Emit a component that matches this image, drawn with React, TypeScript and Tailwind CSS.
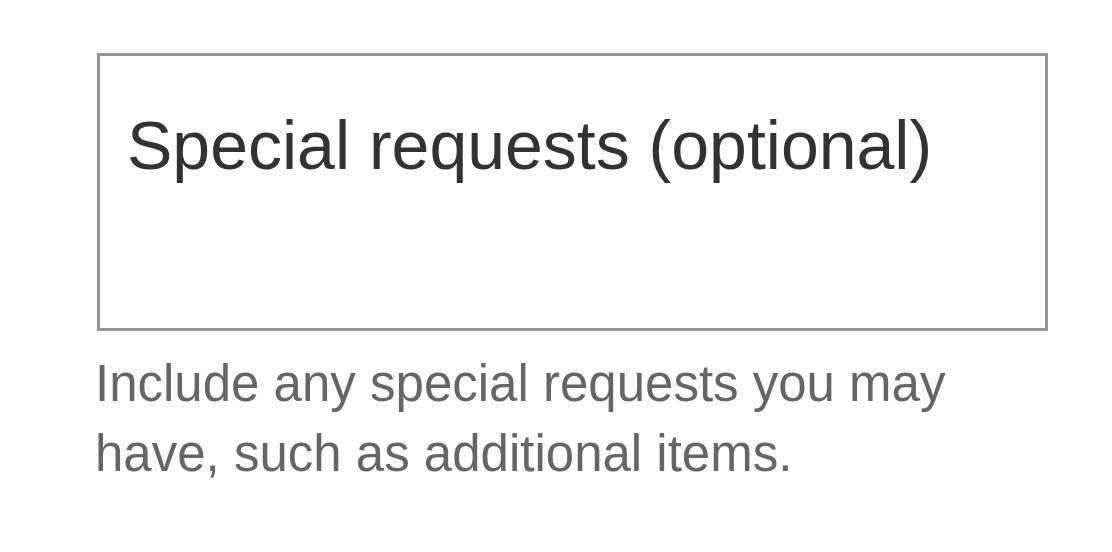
export default function App() {
  return (
    <div className="w-[1112px] h-[552px] bg-white pl-[97px] pt-[53px]" style={{ fontFamily: '"Liberation Sans", Arial, sans-serif' }}>
      <div className="w-[951px]">
        <div className="h-[278px] border-[3px] border-[#939393] pl-[27px] pt-[49px]">
          <div className="text-[68px] leading-[80px] text-[#333333]">Special requests (optional)</div>
        </div>
        <p className="mt-[18px] -ml-[2px] text-[51px] leading-[70px] text-[#666666]">
          Include any special requests you may have, such as additional items.
        </p>
      </div>
    </div>
  );
}
